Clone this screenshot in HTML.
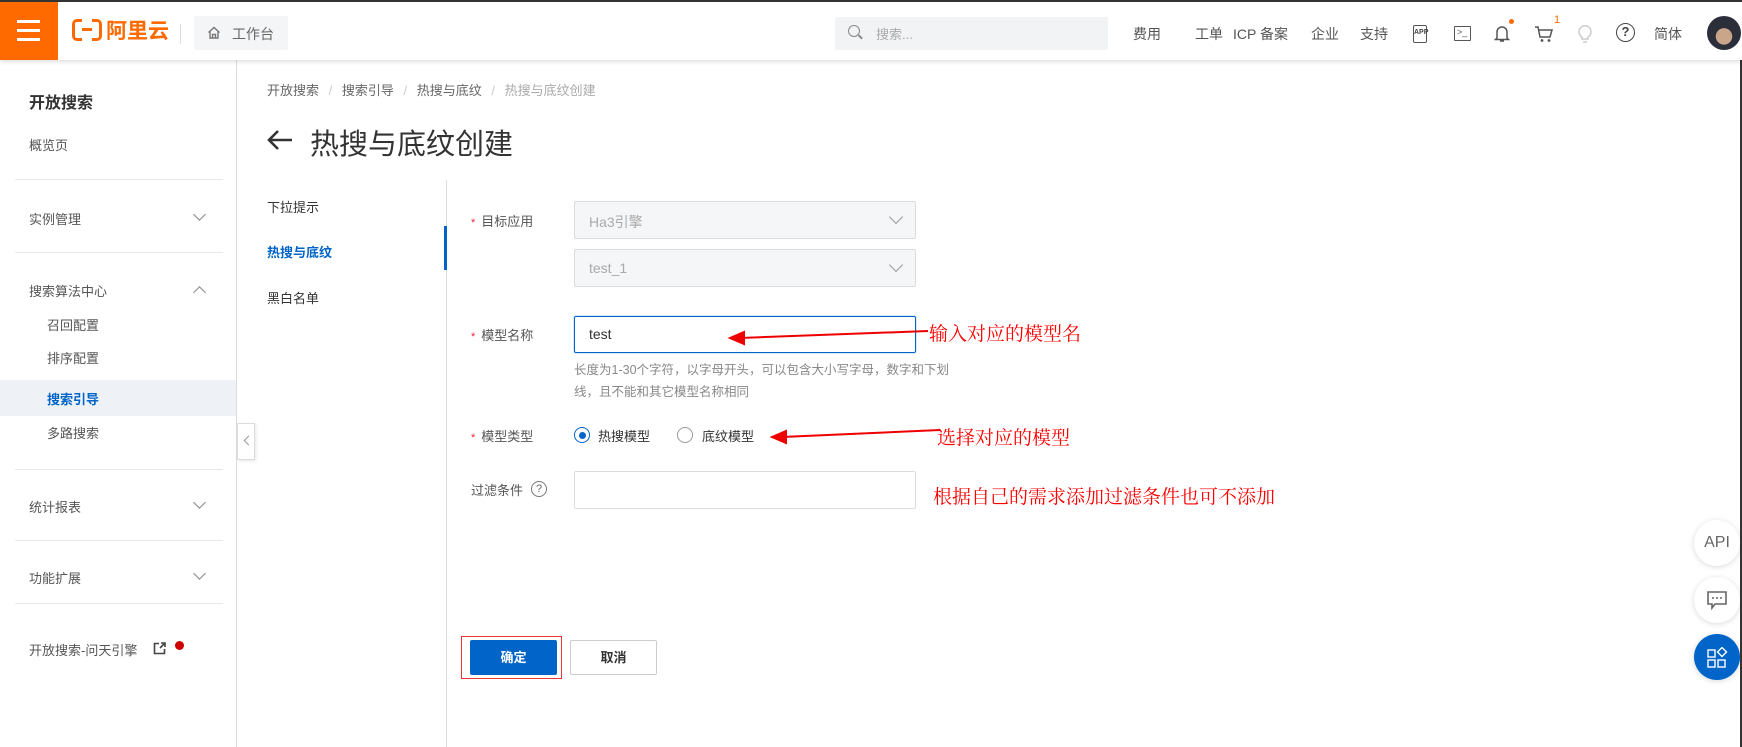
<!DOCTYPE html>
<html><head><meta charset="utf-8"><style>
*{margin:0;padding:0;box-sizing:border-box}
body{width:1742px;height:747px;overflow:hidden;background:#fff;font-family:"Liberation Sans","Noto Sans CJK SC",sans-serif;color:#333;position:relative;font-size:14px}
.a{position:absolute;white-space:nowrap}
.hdr{position:absolute;left:0;top:0;width:1742px;height:60px;background:#fff;box-shadow:0 2px 4px rgba(0,0,0,.12);z-index:2;border-top:2px solid #333}
.side{position:absolute;left:0;top:60px;width:237px;height:687px;border-right:1px solid #ddd}
.dv{position:absolute;left:15px;width:208px;height:1px;background:#e8e8e8}
.chev{position:absolute;left:195px;width:9px;height:9px;border-right:1.4px solid #888;border-bottom:1.4px solid #888;transform:rotate(45deg)}
.chevu{transform:rotate(-135deg)}
.sel{position:absolute;left:574px;width:342px;height:38px;background:#f5f6f7;border:1px solid #dcdcdc;border-radius:2px;color:#aaa;font-size:14px;padding:10px 14px}
.sel i{position:absolute;right:14px;top:10px;width:10px;height:10px;border-right:1.4px solid #999;border-bottom:1.4px solid #999;transform:rotate(45deg)}
.lbl{position:absolute;left:471px;font-size:13px;color:#555}
.lbl b{color:#e23;font-weight:normal;margin-right:6px;font-size:11px}
.red{position:absolute;color:#f00;font-family:"Liberation Serif","Noto Serif CJK SC",serif;font-size:19px;white-space:nowrap}
.fb{position:absolute;left:1694px;width:46px;height:46px;border-radius:50%;background:#fff;box-shadow:0 1px 6px rgba(0,0,0,.15)}
</style></head><body>
<div class="hdr">
 <div class="a" style="left:0;top:0;width:58px;height:58px;background:#ff6a00">
  <div class="a" style="left:17px;top:18px;width:23px;height:2.5px;background:#fff"></div>
  <div class="a" style="left:17px;top:27px;width:23px;height:2.5px;background:#fff"></div>
  <div class="a" style="left:17px;top:36px;width:23px;height:2.5px;background:#fff"></div>
 </div>
 <div class="a" style="left:72px;top:17px;width:30px;height:22px;border:3.5px solid #ff6a00;border-radius:5px"></div>
 <div class="a" style="left:82px;top:14px;width:10px;height:28px;background:#fff"></div>
 <div class="a" style="left:82px;top:26px;width:10px;height:3px;background:#ff6a00"></div>
 <div class="a" style="left:106px;top:13px;font-size:21px;font-weight:bold;color:#ff6a00">阿里云</div>
 <div class="a" style="left:180px;top:22px;width:1px;height:20px;background:#ddd"></div>
 <div class="a" style="left:194px;top:14px;width:94px;height:34px;background:#f4f5f7;border-radius:2px"></div>
 <svg class="a" style="left:207px;top:24px" width="14" height="13"><path d="M1.5 6.5L7 1.5l5.5 5 M3 5.5V12h8V5.5 M5.5 12V8.5h3V12" fill="none" stroke="#777" stroke-width="1.4"/></svg>
 <div class="a" style="left:232px;top:22px;font-size:14px;color:#666">工作台</div>
 <div class="a" style="left:835px;top:15px;width:273px;height:33px;background:#f2f3f5;border-radius:2px"></div>
 <div class="a" style="left:848px;top:23px;width:12px;height:12px;border:1.5px solid #888;border-radius:50%"></div>
 <div class="a" style="left:858px;top:34px;width:5px;height:1.5px;background:#888;transform:rotate(45deg)"></div>
 <div class="a" style="left:876px;top:22px;font-size:13px;color:#aaa">搜索...</div>
 <div class="a" style="left:1133px;top:22px;font-size:14px;color:#555">费用</div>
 <div class="a" style="left:1195px;top:22px;font-size:14px;color:#555">工单</div>
 <div class="a" style="left:1233px;top:22px;font-size:14px;color:#555">ICP 备案</div>
 <div class="a" style="left:1311px;top:22px;font-size:14px;color:#555">企业</div>
 <div class="a" style="left:1360px;top:22px;font-size:14px;color:#555">支持</div>
 <div class="a" style="left:1413px;top:23px;width:14px;height:18px;border:1.5px solid #555;border-radius:2px;font-size:7px;font-weight:bold;color:#444;text-align:center;line-height:13px">APP</div>
 <div class="a" style="left:1454px;top:24px;width:17px;height:15px;border:1.5px solid #555;border-radius:1px;font-size:9px;line-height:11px;padding-left:2px;color:#555">&gt;_</div>
 <svg class="a" style="left:1494px;top:22px" width="16" height="20"><path d="M3 14V8a5 5 0 0110 0v6l1.5 1.5h-13z M6 17h4" fill="none" stroke="#555" stroke-width="1.5"/></svg>
 <div class="a" style="left:1509px;top:17px;width:5px;height:5px;border-radius:50%;background:#ff6a00"></div>
 <svg class="a" style="left:1534px;top:22px" width="20" height="20"><path d="M1 3h3l2 10h10l2-7H5" fill="none" stroke="#555" stroke-width="1.5"/><circle cx="8" cy="16.5" r="1.4" fill="#555"/><circle cx="15" cy="16.5" r="1.4" fill="#555"/></svg>
 <div class="a" style="left:1554px;top:12px;font-size:11px;color:#ff6a00">1</div>
 <svg class="a" style="left:1577px;top:21px" width="16" height="22"><path d="M5 14a6 6 0 116 0v2H5z M6 19h4" fill="none" stroke="#ccc" stroke-width="1.5"/></svg>
 <div class="a" style="left:1616px;top:21px;width:19px;height:19px;border:1.8px solid #444;border-radius:50%;font-size:13px;font-weight:bold;text-align:center;line-height:16px;color:#444">?</div>
 <div class="a" style="left:1654px;top:22px;font-size:14px;color:#555">简体</div>
 <div class="a" style="left:1707px;top:14px;width:34px;height:34px;border-radius:50%;background:radial-gradient(circle at 50% 60%,#c9a58a 0 30%,#2b2f3a 32%);"></div>
</div>

<div class="side">
 <div class="a" style="left:29px;top:29px;font-size:16px;font-weight:bold;color:#333">开放搜索</div>
 <div class="a" style="left:29px;top:75px;font-size:13px;color:#555">概览页</div>
 <div class="dv" style="top:119px"></div>
 <div class="a" style="left:29px;top:149px;font-size:13px;color:#555">实例管理</div><div class="chev" style="top:150px"></div>
 <div class="dv" style="top:192px"></div>
 <div class="a" style="left:29px;top:221px;font-size:13px;color:#555">搜索算法中心</div><div class="chev chevu" style="top:228px"></div>
 <div class="a" style="left:47px;top:255px;font-size:13px;color:#555">召回配置</div>
 <div class="a" style="left:47px;top:288px;font-size:13px;color:#555">排序配置</div>
 <div class="a" style="left:0;top:320px;width:236px;height:36px;background:#eef1f6"></div>
 <div class="a" style="left:47px;top:329px;font-size:13px;color:#0064c8;font-weight:bold">搜索引导</div>
 <div class="a" style="left:47px;top:363px;font-size:13px;color:#555">多路搜索</div>
 <div class="dv" style="top:409px"></div>
 <div class="a" style="left:29px;top:437px;font-size:13px;color:#555">统计报表</div><div class="chev" style="top:438px"></div>
 <div class="dv" style="top:480px"></div>
 <div class="a" style="left:29px;top:508px;font-size:13px;color:#555">功能扩展</div><div class="chev" style="top:509px"></div>
 <div class="dv" style="top:543px"></div>
 <div class="a" style="left:29px;top:580px;font-size:13px;color:#555">开放搜索-问天引擎</div>
 <svg class="a" style="left:153px;top:582px" width="13" height="13"><path d="M6 1.5H1.5v10h10V7 M7 6l5-5 M8 1h4v4" fill="none" stroke="#444" stroke-width="1.6"/></svg>
 <div class="a" style="left:175px;top:581px;width:9px;height:9px;border-radius:50%;background:#c00"></div>
</div>
<div class="a" style="left:237px;top:423px;width:18px;height:37px;background:#fff;border:1px solid #ddd;box-shadow:1px 1px 3px rgba(0,0,0,.1)"></div>
<div class="a" style="left:245px;top:437px;width:7px;height:7px;border-left:1.3px solid #999;border-bottom:1.3px solid #999;transform:rotate(45deg)"></div>

<div class="a" style="left:267px;top:80px;font-size:13px;color:#666">开放搜索 <span style="color:#ccc;margin:0 6px">/</span> 搜索引导 <span style="color:#ccc;margin:0 6px">/</span> 热搜与底纹 <span style="color:#ccc;margin:0 6px">/</span> <span style="color:#aaa">热搜与底纹创建</span></div>
<svg class="a" style="left:265px;top:128px" width="30" height="24"><path d="M27 12H4 M13 3L4 12l9 9" fill="none" stroke="#333" stroke-width="2.6"/></svg>
<div class="a" style="left:310px;top:121px;font-size:29px;color:#333">热搜与底纹创建</div>

<div class="a" style="left:446px;top:180px;width:1px;height:567px;background:#ddd"></div>
<div class="a" style="left:444px;top:226px;width:3px;height:44px;background:#0064c8"></div>
<div class="a" style="left:267px;top:197px;font-size:13px;color:#333">下拉提示</div>
<div class="a" style="left:267px;top:242px;font-size:13px;color:#0064c8;font-weight:bold">热搜与底纹</div>
<div class="a" style="left:267px;top:288px;font-size:13px;color:#333">黑白名单</div>

<div class="lbl" style="top:211px"><b>*</b>目标应用</div>
<div class="sel" style="top:201px">Ha3引擎<i></i></div>
<div class="sel" style="top:249px">test_1<i></i></div>
<div class="lbl" style="top:325px"><b>*</b>模型名称</div>
<div class="a" style="left:574px;top:316px;width:342px;height:37px;border:1px solid #0064c8;border-radius:2px;box-shadow:0 0 0 1px rgba(0,100,200,.15);padding:9px 14px;font-size:14px;color:#333">test</div>
<div class="a" style="left:574px;top:359px;font-size:12.5px;color:#888;line-height:22px">长度为1-30个字符，以字母开头，可以包含大小写字母，数字和下划<br>线，且不能和其它模型名称相同</div>
<div class="lbl" style="top:426px"><b>*</b>模型类型</div>
<div class="a" style="left:574px;top:427px;width:16px;height:16px;border:1.5px solid #0064c8;border-radius:50%"></div>
<div class="a" style="left:578.5px;top:431.5px;width:7px;height:7px;background:#0064c8;border-radius:50%"></div>
<div class="a" style="left:598px;top:426px;font-size:13px;color:#333">热搜模型</div>
<div class="a" style="left:677px;top:427px;width:16px;height:16px;border:1.3px solid #999;border-radius:50%"></div>
<div class="a" style="left:702px;top:426px;font-size:13px;color:#333">底纹模型</div>
<div class="lbl" style="top:480px;left:471px">过滤条件</div>
<div class="a" style="left:531px;top:481px;width:16px;height:16px;border:1.2px solid #777;border-radius:50%;font-size:11px;text-align:center;line-height:14px;color:#666">?</div>
<div class="a" style="left:574px;top:471px;width:342px;height:38px;border:1px solid #dcdcdc;border-radius:2px"></div>

<div class="red" style="left:929px;top:319px">输入对应的模型名</div>
<div class="red" style="left:937px;top:423px">选择对应的模型</div>
<div class="red" style="left:933px;top:482px">根据自己的需求添加过滤条件也可不添加</div>
<svg class="a" style="left:0;top:0" width="1742" height="747"><g stroke="#e00" stroke-width="2" fill="#e00"><line x1="928" y1="331" x2="740" y2="338"/><path d="M730 338l14-6v12z"/><line x1="940" y1="430" x2="782" y2="437"/><path d="M772 437l14-6v12z"/></g></svg>

<div class="a" style="left:461px;top:636px;width:101px;height:43px;border:1.5px solid #e33"></div>
<div class="a" style="left:470px;top:640px;width:87px;height:35px;background:#0064c8;border-radius:2px;color:#fff;font-size:13px;font-weight:bold;text-align:center;line-height:35px">确定</div>
<div class="a" style="left:570px;top:640px;width:87px;height:35px;border:1px solid #ccc;border-radius:2px;color:#333;font-size:13px;font-weight:bold;text-align:center;line-height:33px">取消</div>

<div class="fb" style="top:520px;font-size:16px;color:#666;text-align:center;line-height:46px;font-family:'Liberation Sans Narrow','Liberation Sans',sans-serif">API</div>
<div class="fb" style="top:577px"><svg style="position:absolute;left:13px;top:13px" width="20" height="20"><path d="M1 2h18v12H8l-3 4v-4H1z" fill="none" stroke="#666" stroke-width="1.6"/><circle cx="6" cy="8" r="1" fill="#666"/><circle cx="10" cy="8" r="1" fill="#666"/><circle cx="14" cy="8" r="1" fill="#666"/></svg></div>
<div class="fb" style="top:634px;background:#0064c8"><svg style="position:absolute;left:13px;top:13px" width="22" height="22"><g fill="none" stroke="#fff" stroke-width="1.4"><rect x="1" y="3" width="7" height="7"/><rect x="1" y="13" width="7" height="7"/><rect x="11" y="13" width="7" height="7"/><path d="M15 0.5l4.5 4.5-4.5 4.5-4.5-4.5z"/></g></svg></div>
<div class="a" style="left:1740px;top:0;width:2px;height:747px;background:#333"></div>
</body></html>
